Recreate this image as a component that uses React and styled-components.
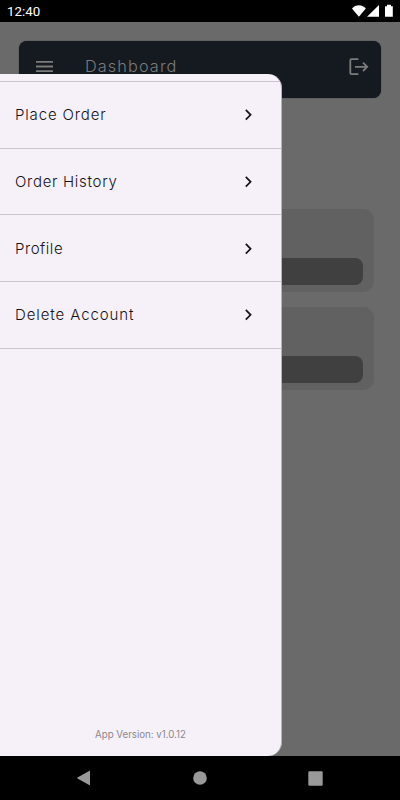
import React from 'react'
import styled, { createGlobalStyle } from 'styled-components'

const GlobalStyle = createGlobalStyle`
  * {
    box-sizing: border-box;
  }
  body {
    margin: 0;
    background: #000;
    font-family: Inter, sans-serif;
  }
  svg {
    display: block;
    flex: none;
  }
`

const Screen = styled.div`
  width: 400px;
  height: 800px;
  display: flex;
  flex-direction: column;
  overflow: hidden;
  background: #000;
`

const StatusBar = styled.header`
  height: 22px;
  flex: none;
  display: flex;
  align-items: center;
  justify-content: space-between;
  padding: 1px 7px 0 7px;
  color: #fff;
`

const Clock = styled.span`
  font: 400 13.3px/20px Roboto, sans-serif;
`

const Page = styled.main`
  position: relative;
  height: 734px;
  flex: none;
  padding: 19px 19px 0;
  background: #6a6a6a;
`

const Toolbar = styled.div`
  height: 57px;
  display: flex;
  align-items: center;
  padding: 0 12px 6px 16px;
  border-radius: 8px;
  background: #151a21;
  color: #7b7b7b;
  box-shadow: 0 0 1px #151a21;
`

const Title = styled.h1`
  flex: 1;
  margin: -1px 0 0 32px;
  font-size: 16.3px;
  font-weight: 350;
  line-height: 24px;
  letter-spacing: 1.1px;
`

const Cards = styled.section`
  display: grid;
  gap: 15px;
  margin: 111px 7px 0;
`

const Card = styled.div`
  height: 83px;
  display: flex;
  align-items: flex-end;
  padding: 0 11px 7px;
  border-radius: 11px;
  background: #616161;
`

const CardButton = styled.div`
  flex: 1;
  height: 27px;
  border-radius: 8px;
  background: #404040;
`

const Drawer = styled.aside`
  position: absolute;
  left: 0;
  top: 51.5px;
  bottom: 0.5px;
  width: 282px;
  display: flex;
  flex-direction: column;
  padding-top: 7.5px;
  border-right: 1px solid #b8b5ba;
  border-radius: 0 14px 14px 0;
  background: #f6f1f9;
  overflow: hidden;
`

const Menu = styled.nav`
  flex: 1;
  border-top: 1px solid #cac6cf;
`

const MenuItem = styled.div`
  height: 66.67px;
  display: flex;
  align-items: center;
  justify-content: space-between;
  padding: 1px 25px 0 15px;
  border-bottom: 1px solid #cac6cf;
  color: #15131a;
`

const Label = styled.span`
  font-size: 15px;
  font-weight: 300;
  line-height: 24px;
  letter-spacing: ${({ $spacing }) => $spacing}px;
`

const Version = styled.footer`
  padding-bottom: 14px;
  text-align: center;
  font-size: 9.7px;
  line-height: 14px;
  letter-spacing: 0;
  color: #8b888d;
`

const NavBar = styled.footer`
  height: 44px;
  flex: none;
  display: flex;
  align-items: center;
  justify-content: space-between;
  padding: 0 77px 0 76px;
`

const items = [
  { label: 'Place Order', spacing: 0.85 },
  { label: 'Order History', spacing: 0.7 },
  { label: 'Profile', spacing: 0.55 },
  { label: 'Delete Account', spacing: 0.9 },
]

const StatusIcons = () => (
  <svg width='44' height='20' viewBox='0 0 44 20' fill='#fff'>
    <path d='M3 6.5C7 2.2 12.8 2.2 16.8 6.5L9.9 14.7Z' />
    <path d='M30 3v11.7H18Z' />
    <path d='M36 4.2h2V2.8h4V4.2h1.8v10.5H36Z' />
  </svg>
)

const MenuIcon = () => (
  <svg width='18' height='14' viewBox='0 0 18 14' stroke='currentColor' strokeWidth='1.8'>
    <path d='M1 1.8h17M1 6.5h17M1 11.2h17' />
  </svg>
)

const LogoutIcon = () => (
  <svg width='20' height='18' viewBox='0 0 20 18' fill='none' stroke='currentColor' strokeWidth='1.8'>
    <path d='M9.4 1.2H2.5Q1.3 1.2 1.3 2.4V15Q1.3 16.2 2.5 16.2H9.4M6 8.8H18.2M14 4.6l4.2 4.2-4.2 4.2' />
  </svg>
)

const Chevron = () => (
  <svg width='14' height='14' viewBox='0 0 14 14' fill='none' stroke='currentColor' strokeWidth='1.7'>
    <path d='M3.8 1.9l4.8 4.9-4.8 4.9' />
  </svg>
)

export default () => {
  return (
    <>
      <GlobalStyle />
      <Screen>
        <StatusBar>
          <Clock>12:40</Clock>
          <StatusIcons />
        </StatusBar>
        <Page>
          <Toolbar>
            <MenuIcon />
            <Title>Dashboard</Title>
            <LogoutIcon />
          </Toolbar>
          <Cards>
            <Card><CardButton /></Card>
            <Card><CardButton /></Card>
          </Cards>
          <Drawer>
            <Menu>
              {
                items.map(({ label, spacing }) => (
                  <MenuItem key={label}>
                    <Label $spacing={spacing}>{label}</Label>
                    <Chevron />
                  </MenuItem>
                ))
              }
            </Menu>
            <Version>App Version: v1.0.12</Version>
          </Drawer>
        </Page>
        <NavBar>
          <svg width='14' height='16' viewBox='0 0 14 16' fill='#999'>
            <path d='M14 .5v15L1.5 8.6Q.8 8 1.5 7.4Z' />
          </svg>
          <svg width='16' height='14' viewBox='0 0 16 14' fill='#999'>
            <circle cx='9' cy='7' r='6.8' />
          </svg>
          <svg width='15' height='15' viewBox='0 0 15 15' fill='#999'>
            <rect x='.3' y='.3' width='14.4' height='14.4' rx='1.2' />
          </svg>
        </NavBar>
      </Screen>
    </>
  )
}
